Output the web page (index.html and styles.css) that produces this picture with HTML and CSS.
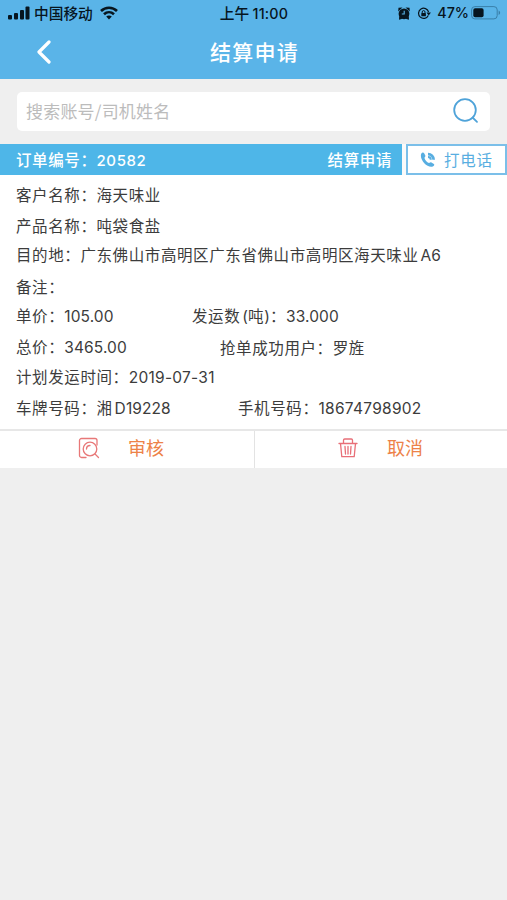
FILE: index.html
```html
<!DOCTYPE html>
<html lang="zh-CN">
<head>
<meta charset="utf-8">
<title>结算申请</title>
<link rel="stylesheet" href="styles.css">
</head>
<body>
<header class="header">
  <div class="status">
    <div class="status-left">
      <svg class="signal" width="22" height="14" viewBox="0 0 22 14"><rect x="0" y="9" width="4" height="4.500" rx="1"/><rect x="6" y="7" width="4" height="6.500" rx="1"/><rect x="12" y="4" width="4" height="9.500" rx="1"/><rect x="17.500" y="0.500" width="4" height="13" rx="1"/></svg>
      <span>中国移动</span>
      <svg class="wifi" width="18" height="14" viewBox="0 0 18 14" fill="none" stroke="#07151f" stroke-width="2.600"><path d="M1 5C5.500.6 12.500.6 17 5M4 8.300c2.900-2.700 7.100-2.700 10 0"/><path d="M6.200 10.600c1.600-1.400 4-1.400 5.600 0L9 13.500z" fill="#07151f" stroke="none"/></svg>
    </div>
    <div class="time">上午 <span class="clock">11:00</span></div>
    <div class="status-right">
      <svg width="12" height="13" viewBox="0 0 12 13"><circle cx="6" cy="6.800" r="5.400"/><path d="M.2 4.500.5.8 4.500.5zM11.800 4.500 11.500.8 7.500.5zM1.200 9 1 12.700l3.500-1zM10.800 9l.2 3.700-3.500-1z"/><path d="M6.200 3.800v3.200H3.800" fill="none" stroke="#5ab4e8" stroke-width="1.100"/></svg>
      <svg class="lock" width="14" height="13" viewBox="0 0 14 13"><path d="M11.300 8.500A5.100 5.100 0 1 1 11.600 5" fill="none" stroke="#07151f" stroke-width="1.200"/><path d="M9.500 5.500h4.400l-2.200 3z"/><rect x="4.300" y="6" width="4.600" height="3.300" rx=".5"/><path d="M5.200 6V5a1.400 1.400 0 0 1 2.800 0v1" fill="none" stroke="#07151f"/></svg>
      <span class="percent">47%</span>
      <svg class="battery" width="30" height="14" viewBox="0 0 30 14"><rect x=".6" y=".6" width="25.600" height="12.300" rx="3.300" fill="none" stroke="#397fa9" stroke-width="1"/><rect x="2.300" y="2.300" width="10.300" height="9" rx="1.800"/><path d="M27.600 4.500c2 .8 2 3.700 0 4.500z" fill="#397fa9"/></svg>
    </div>
  </div>
  <div class="nav">
    <svg class="back" width="16" height="26" viewBox="0 0 16 26"><path d="M14 3 4 13l10 10" fill="none" stroke="#fff" stroke-width="3.200" stroke-linecap="round" stroke-linejoin="round"/></svg>
    <h1>结算申请</h1>
  </div>
</header>
<div class="search-wrap">
  <div class="search">
    <span>搜索账号/司机姓名</span>
    <svg width="28" height="28" viewBox="0 0 28 28" fill="none" stroke="#4fa3d9" stroke-width="1.800" stroke-linecap="round"><circle cx="13" cy="12" r="10.800"/><path d="m20.500 19.500 4.500 4.300"/></svg>
  </div>
</div>
<main>
  <div class="order-head">
    <div class="order-bar"><span>订单编号：<span class="num-bold">20582</span></span><span>结算申请</span></div>
    <div class="call">
      <svg width="16" height="15" viewBox="0 0 16 15"><path d="M1.200 1.700C2.300.1 3.600.2 4.300 1.500l1 2c.5 1-.9 1.700-.8 2.500.3 1.900 2.500 4.400 4.400 4.900.8.200 1.600-1 2.500-.5l2.500 1.600c1 .7-.4 2.400-1.900 2.700C6.800 15.700-.8 7.200 1.200 1.700z"/><path d="M8 .7a7 7 0 0 1 7 7h-2.700A4.300 4.300 0 0 0 8 3.400zM8 3.900a3.800 3.800 0 0 1 3.800 3.800H9.800A1.800 1.800 0 0 0 8 5.900z"/></svg>
      <span>打电话</span>
    </div>
  </div>
  <div class="details">
    <div class="row"><span>客户名称：海天味业</span></div>
    <div class="row"><span>产品名称：吨袋食盐</span></div>
    <div class="row"><span>目的地：广东佛山市高明区广东省佛山市高明区海天味业<span class="num gap">A6</span></span></div>
    <div class="row"><span>备注：</span></div>
    <div class="row"><span class="price">单价：<span class="num">105.00</span></span><span>发运数<span class="num gap">(</span>吨<span class="num">)</span>：<span class="num">33.000</span></span></div>
    <div class="row"><span class="total">总价：<span class="num">3465.00</span></span><span>抢单成功用户：罗旌</span></div>
    <div class="row"><span>计划发运时间：<span class="num date">2019-07-31</span></span></div>
    <div class="row"><span class="plate">车牌号码：湘<span class="num gap">D19228</span></span><span>手机号码：<span class="num phone">18674798902</span></span></div>
  </div>
  <div class="actions">
    <div class="action review">
      <svg width="22" height="22" viewBox="0 0 22 22" fill="none" stroke="#e87878" stroke-width="1.300" stroke-linecap="round"><path d="M8 20.500H3.500a2 2 0 0 1-2-2V3.500a2 2 0 0 1 2-2H17a2 2 0 0 1 2 2V8"/><circle cx="12" cy="12" r="6.800"/><path d="M8.500 12A3.600 3.600 0 0 1 12 8.500M17 17l3.500 3.500"/></svg>
      <span>审核</span>
    </div>
    <div class="action cancel">
      <svg width="20" height="22" viewBox="0 0 20 22" fill="none" stroke="#e86f78" stroke-width="1.300" stroke-linecap="round" stroke-linejoin="round"><path d="M1 6.500h18M5.500 6.500V3.200A1.200 1.200 0 0 1 6.700 2h6.600a1.200 1.200 0 0 1 1.200 1.200v3.300M2.500 6.500l1.300 13.200h12.400l1.300-13.200M7 9.500l.5 7.500M10 9.500V17M13 9.500l-.5 7.500"/></svg>
      <span>取消</span>
    </div>
  </div>
</main>
</body>
</html>
```

FILE: styles.css
```css
* { box-sizing: border-box; }
body {
  margin: 0;
  min-height: 900px;
  background: #efefef;
  color: #3c3c3c;
  font-family: "Noto Sans CJK SC", sans-serif;
  overflow: hidden;
}
svg { display: block; flex: none; }
.header { height: 79px; background: #5ab4e8; }
.status {
  display: grid;
  grid-template-columns: 1fr auto 1fr;
  height: 26px;
  padding: 0 6px 0 8px;
  align-items: center;
  color: #07151f;
  fill: #07151f;
  font-size: 14.700px;
  font-weight: 500;
  line-height: 20px;
}
.status-left, .status-right { display: flex; align-items: center; }
.status-left span { margin: 0 7px 0 4px; }
.status-right { justify-content: flex-end; }
.time { margin-left: -1px; }
.clock, .percent { font-family: Inter, sans-serif; font-size: 14.300px; }
.clock { letter-spacing: .2px; }
.lock { margin: 0 6px 0 7px; }
.percent { margin-right: 2px; }
.nav {
  display: grid;
  grid-template-columns: 60px 1fr 60px;
  align-items: center;
  height: 52px;
}
.back { margin-left: 35px; }
h1 {
  margin: 0 0 2px 2px;
  color: #fff;
  font-size: 21px;
  font-weight: 500;
  letter-spacing: 1.200px;
  line-height: 30px;
  text-align: center;
}
.search-wrap { padding: 13px 17px; }
.search {
  display: flex;
  height: 39px;
  padding: 0 10px 0 9px;
  align-items: center;
  justify-content: space-between;
  border-radius: 5px;
  background: #fff;
  color: #bcbcbc;
  font-size: 17px;
  letter-spacing: .2px;
}
.search span { margin-bottom: 2px; }
.order-head { display: flex; height: 31px; background: #fafafa; }
.order-bar {
  display: flex;
  width: 402px;
  padding: 0 10px 2px 16px;
  align-items: center;
  justify-content: space-between;
  background: #4eb6e8;
  color: #fff;
  font-size: 15.500px;
  font-weight: 500;
  letter-spacing: .6px;
}
.num-bold { font-family: Inter, sans-serif; font-size: 15px; }
.call {
  display: flex;
  flex: 1;
  margin-left: 4px;
  padding-left: 12px;
  align-items: center;
  gap: 8px;
  border: 2px solid #7bbfe9;
  background: #fff;
  color: #58aee1;
  fill: #58aee1;
  font-size: 15.500px;
  letter-spacing: .8px;
  white-space: nowrap;
}
.call span { margin-bottom: 2px; }
.details {
  height: 254px;
  padding: 4px 16px 0;
  background: #fff;
  font-size: 15.500px;
  letter-spacing: .6px;
}
.row { display: flex; height: 30.500px; align-items: center; white-space: nowrap; line-height: 24px; }
.num { font-family: Inter, sans-serif; font-size: 15.500px; letter-spacing: .1px; }
.date, .phone { letter-spacing: .27px; }
.gap { margin-left: 2px; }
.price { width: 176px; }
.total { width: 204px; }
.plate { width: 222px; }
.actions {
  display: grid;
  grid-template-columns: 255px 1fr;
  height: 39px;
  border-top: 2px solid #e7e7e7;
  background: #fff;
}
.action { display: flex; align-items: center; padding-bottom: 4px; color: #ed8248; font-size: 18px; }
.action span { margin-bottom: 2px; }
.review { padding-left: 78px; gap: 28px; border-right: 1px solid #e3e3e3; }
.cancel { padding-left: 83px; gap: 29px; }
```
